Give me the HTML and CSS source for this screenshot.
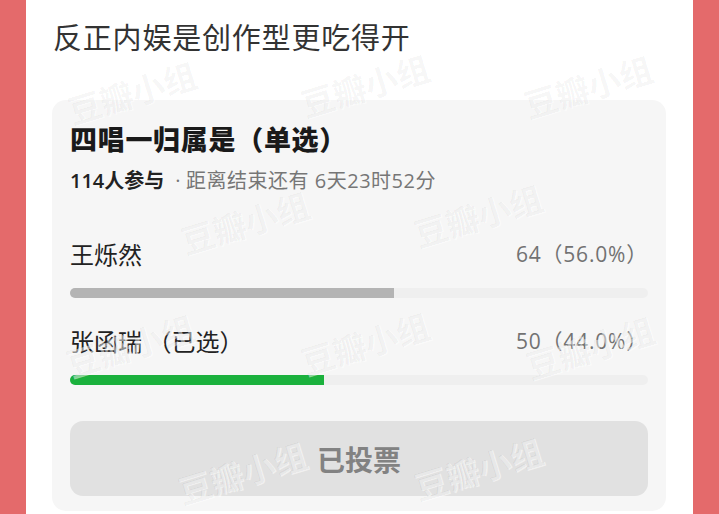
FILE: index.html
```html
<!DOCTYPE html>
<html lang="zh-CN">
<head>
    <meta charset="UTF-8">
    <meta name="viewport" content="width=device-width, initial-scale=1.0">
    <title>四唱一归属是（单选）</title>
    <link rel="stylesheet" href="styles.css">
</head>
<body>
    <div class="panel">
        <div class="post-title">反正内娱是创作型更吃得开</div>

        <div class="poll-card">
            <div class="poll-title">四唱一归属是（单选）</div>
            <div class="poll-meta"><span class="poll-count">114人参与</span><span class="dot">·</span>距离结束还有 6天23时52分</div>

            <div class="option first">
                <div class="option-row">
                    <span class="option-name">王烁然</span>
                    <span class="option-votes">64（56.0%）</span>
                </div>
                <div class="bar-track"><div class="bar-fill" style="width: 56%"></div></div>
            </div>

            <div class="option">
                <div class="option-row">
                    <span class="option-name">张函瑞 （已选）</span>
                    <span class="option-votes">50（44.0%）</span>
                </div>
                <div class="bar-track"><div class="bar-fill selected" style="width: 44%"></div></div>
            </div>

            <button class="vote-button" disabled>已投票</button>
        </div>
    </div>

    <!-- 水印 -->
    <div class="watermarks">
        <span class="wm">豆瓣小组</span>
        <span class="wm">豆瓣小组</span>
        <span class="wm">豆瓣小组</span>
        <span class="wm">豆瓣小组</span>
        <span class="wm">豆瓣小组</span>
        <span class="wm">豆瓣小组</span>
        <span class="wm">豆瓣小组</span>
        <span class="wm">豆瓣小组</span>
        <span class="wm">豆瓣小组</span>
        <span class="wm">豆瓣小组</span>
    </div>
</body>
</html>
```

FILE: styles.css
```css
body {
    margin: 0;
    height: 514px;
    overflow: hidden;
    position: relative;
    background: #e46a6b;
    font-family: "Noto Sans CJK SC", "Noto Sans", sans-serif;
}
.panel {
    margin: 0 26px;
    height: 514px;
    background: #fff;
    padding: 16px 27px 0 26px;
    box-sizing: border-box;
}
.post-title {
    padding-left: 1px;
    font-size: 29px;
    line-height: 40px;
    letter-spacing: 0.8px;
    color: #333;
}
.poll-card {
    margin-top: 44px;
    background: #f6f6f6;
    border-radius: 14px;
    padding: 22px 18px 15px;
}
.poll-title {
    font-size: 27px;
    line-height: 34px;
    letter-spacing: 0.7px;
    font-weight: 900;
    color: #1a1a1a;
}
.poll-meta {
    margin-top: 12px;
    font-family: "Open Sans", "Noto Sans CJK SC", sans-serif;
    font-size: 20px;
    line-height: 26px;
    letter-spacing: 0.5px;
    color: #767676;
}
.poll-count {
    color: #222;
    font-weight: 600;
    letter-spacing: 0;
}
.dot {
    margin: 0 5px 0 11px;
}
.option {
    margin-top: 27px;
}
.option.first {
    margin-top: 44px;
}
.option-row {
    display: flex;
    justify-content: space-between;
    align-items: center;
    line-height: 32px;
}
.option-name {
    font-size: 24px;
    color: #222;
}
.option-votes {
    font-family: "Open Sans", "Noto Sans CJK SC", sans-serif;
    font-size: 21px;
    letter-spacing: 0.8px;
    color: #727272;
}
.bar-track {
    margin-top: 18px;
    height: 10px;
    border-radius: 5px;
    background: #efefef;
    overflow: hidden;
}
.bar-fill {
    height: 100%;
    background: #b4b4b4;
}
.bar-fill.selected {
    background: #1bb13d;
}
.vote-button {
    display: block;
    width: 100%;
    height: 75px;
    margin-top: 36px;
    border: none;
    border-radius: 13px;
    background: #e1e1e1;
    color: #828282;
    font-family: inherit;
    font-size: 28px;
    font-weight: bold;
}
.watermarks {
    position: absolute;
    inset: 0;
    pointer-events: none;
}
.wm {
    position: absolute;
    transform: translate(-50%, -50%) rotate(-17deg);
    font-size: 33px;
    font-weight: bold;
    white-space: nowrap;
    color: rgba(0, 0, 0, 0.045);
    text-shadow: 1px 1px 0 rgba(255, 255, 255, 0.5);
}
.wm:nth-child(1) { left: 132px; top: 92px; }
.wm:nth-child(2) { left: 365px; top: 85px; }
.wm:nth-child(3) { left: 588px; top: 86px; }
.wm:nth-child(4) { left: 245px; top: 222px; }
.wm:nth-child(5) { left: 478px; top: 215px; }
.wm:nth-child(6) { left: 130px; top: 345px; }
.wm:nth-child(7) { left: 365px; top: 343px; }
.wm:nth-child(8) { left: 590px; top: 347px; }
.wm:nth-child(9) { left: 242px; top: 472px; }
.wm:nth-child(10) { left: 478px; top: 468px; }
```
